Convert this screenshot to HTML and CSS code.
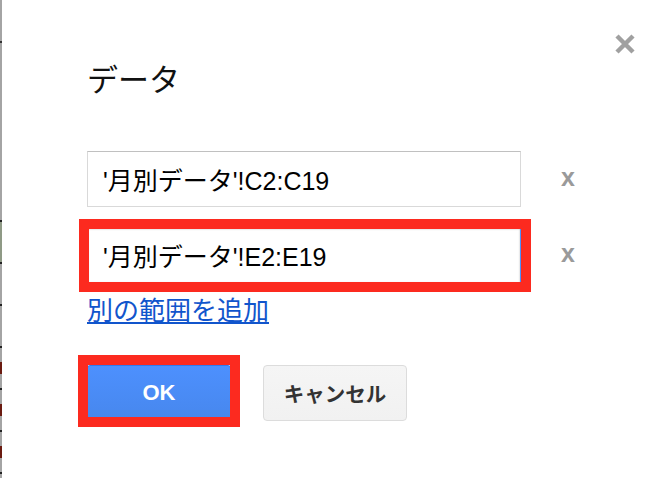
FILE: index.html
```html
<!DOCTYPE html>
<html lang="ja">
<head>
<meta charset="utf-8">
<title>データ</title>
<link rel="stylesheet" href="styles.css">
</head>
<body>
<div class="page">
  <div class="strip"></div>
  <div class="dialog">
    <button class="close" aria-label="閉じる">
      <svg width="22" height="22" viewBox="0 0 22 22"><path d="M3 3 L19 19 M19 3 L3 19" stroke="#a0a0a0" stroke-width="4.5" stroke-linecap="butt" fill="none"/></svg>
    </button>
    <h1 class="title">データ</h1>
    <div class="ranges">
      <div class="row">
        <div class="field">'月別データ'!C2:C19</div>
        <span class="remove">x</span>
      </div>
      <div class="row">
        <div class="field-wrap">
          <div class="field focused">'月別データ'!E2:E19</div>
          <div class="mark mark-field"></div>
        </div>
        <span class="remove">x</span>
      </div>
    </div>
    <a class="add-link" href="#">別の範囲を追加</a>
    <div class="buttons">
      <div class="btn-wrap">
        <button class="btn btn-ok">OK</button>
        <div class="mark mark-ok"></div>
      </div>
      <button class="btn btn-cancel">キャンセル</button>
    </div>
  </div>
</div>
</body>
</html>
```
FILE: styles.css
```css
html, body {
  margin: 0;
  padding: 0;
  background: #fff;
}
body {
  font-family: "Liberation Sans", "Noto Sans CJK JP", sans-serif;
  color: #000;
}
.page {
  display: flex;
  width: 670px;
  height: 478px;
  overflow: hidden;
}
.strip {
  width: 2px;
  flex: none;
  background: linear-gradient(to bottom,
    #a4a4a4 0, #a4a4a4 41px, #333 41px, #333 43px, #a4a4a4 43px,
    #a4a4a4 220px, #222 220px, #222 222px, #8f9a86 222px, #8f9a86 262px,
    #222 262px, #222 264px, #a4a4a4 264px,
    #a4a4a4 304px, #222 304px, #222 306px, #a4a4a4 306px,
    #a4a4a4 346px, #222 346px, #222 348px, #a4a4a4 348px,
    #a4a4a4 362px, #6a1a10 362px, #6a1a10 374px, #a4a4a4 374px,
    #a4a4a4 388px, #222 388px, #222 390px, #a4a4a4 390px,
    #a4a4a4 404px, #6a1a10 404px, #6a1a10 416px, #a4a4a4 416px,
    #a4a4a4 430px, #222 430px, #222 432px, #a4a4a4 432px,
    #a4a4a4 446px, #6a1a10 446px, #6a1a10 458px, #a4a4a4 458px,
    #a4a4a4 472px, #222 472px, #222 474px, #a4a4a4 474px);
}
.dialog {
  position: relative;
  flex: 1;
  padding: 63px 0 0 85px;
  box-sizing: border-box;
}
.close {
  position: absolute;
  top: 33px;
  right: 34px;
  width: 22px;
  height: 22px;
  padding: 0;
  border: 0;
  background: none;
  display: block;
}
.close svg {
  display: block;
  filter: blur(0.4px);
}
.title {
  margin: 0 0 52px;
  font-size: 31px;
  line-height: 36px;
  font-weight: normal;
  color: #111;
}
.ranges {
  display: flex;
  flex-direction: column;
  gap: 20px;
}
.row {
  display: flex;
  align-items: center;
  gap: 40px;
}
.field {
  box-sizing: border-box;
  width: 434px;
  height: 56px;
  border: 1px solid #d9d9d9;
  border-top-color: #c0c0c0;
  padding: 0 0 0 15px;
  display: flex;
  align-items: center;
  font-size: 25px;
  color: #000;
  background: #fff;
}
.field.focused {
  border-color: #4d90fe;
  box-shadow: inset 0 1px 2px rgba(0,0,0,0.3);
}
.field-wrap,
.btn-wrap {
  position: relative;
}
.mark {
  position: absolute;
  border: 10px solid #fc2a1f;
  pointer-events: none;
}
.mark-field {
  left: -8px;
  top: -8px;
  right: -10px;
  bottom: -9px;
}
.mark-ok {
  left: -9px;
  top: -10px;
  right: -9px;
  bottom: -6px;
}
.remove {
  font-size: 25px;
  font-weight: bold;
  color: #9a9a9a;
  line-height: 1;
  margin-top: -4px;
}
.add-link {
  display: inline-block;
  margin-top: 13px;
  font-size: 26px;
  line-height: 30px;
  color: #1155cc;
  text-decoration: underline;
}
.buttons {
  display: flex;
  gap: 32px;
  margin-top: 39px;
}
.btn {
  box-sizing: border-box;
  width: 144px;
  height: 56px;
  border-radius: 3px;
  font-family: "Liberation Sans", "Noto Sans CJK JP", sans-serif;
  font-weight: bold;
  padding: 0;
  display: block;
}
.btn-ok {
  font-size: 22px;
  color: #fff;
  background: linear-gradient(to bottom, #4d90fe, #4787ed);
  border: 1px solid #3079ed;
}
.btn-cancel {
  font-size: 20.5px;
  color: #333;
  background: linear-gradient(to bottom, #f5f5f5, #f1f1f1);
  border: 1px solid #dcdcdc;
  border-radius: 4px;
}
```
